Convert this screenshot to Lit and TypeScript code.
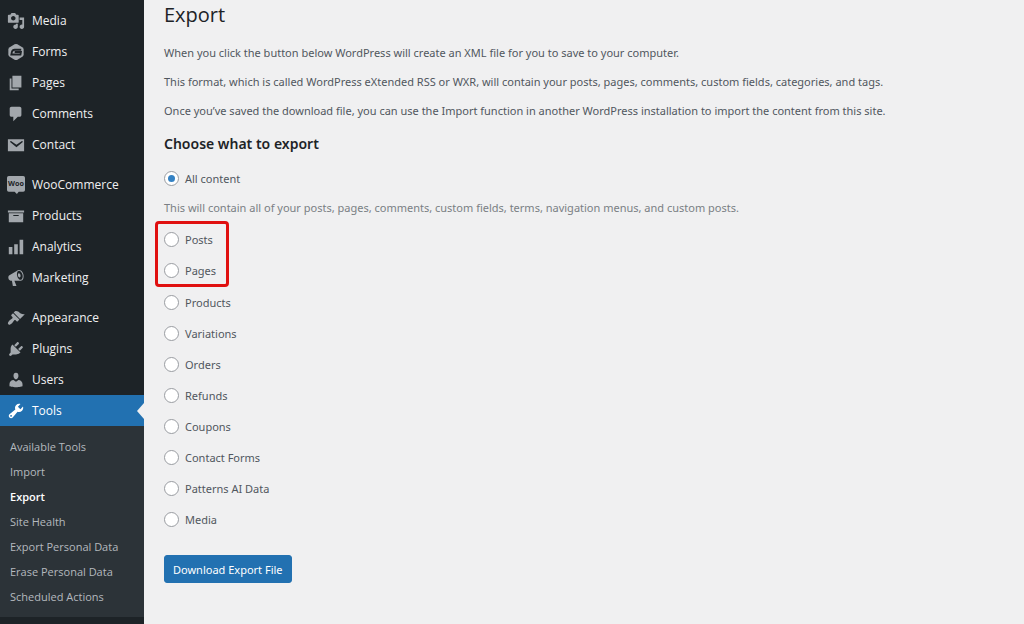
import { LitElement, html, css, svg } from "lit";
import { customElement, property, state } from "lit/decorators.js";

const icons: Record<string, unknown> = {
  media: svg`<path d="M13 11V4c0-.55-.45-1-1-1h-1.67L9 1H5L3.67 3H2c-.55 0-1 .45-1 1v7c0 .55.45 1 1 1h10c.55 0 1-.45 1-1zM7 4.5c1.38 0 2.5 1.12 2.5 2.5S8.38 9.5 7 9.5 4.5 8.38 4.5 7 5.62 4.5 7 4.5zM14 6h5v10.5c0 1.38-1.12 2.5-2.5 2.5S14 17.88 14 16.5s1.12-2.5 2.5-2.5c.17 0 .34.02.5.05V9h-3V6zm-4 8.05V13h2v3.5c0 1.38-1.12 2.5-2.5 2.5S7 17.88 7 16.5 8.12 14 9.5 14c.17 0 .34.02.5.05z"/>`,
  forms: svg`<path d="M8.400 1.500q1.600-.9 3.200 0l5.400 3.100q1.500.9 1.500 2.600v5.600q0 1.700-1.500 2.600l-5.400 3.100q-1.600.9-3.200 0L3 15.400q-1.500-.9-1.500-2.600V7.200Q1.500 5.500 3 4.600z"/><path class="cut" d="M15.800 7.500H8.500Q6 7.500 5.400 10l-.6 2.800h10.200l.5-2.800H8.500"/>`,
  pages: svg`<path d="M6 15V2h10v13H6zm-1 1h8v2H3V5h2v11z"/>`,
  comments: svg`<path d="M5 2h9c1.100 0 2 .9 2 2v7c0 1.100-.9 2-2 2h-2l-5 5v-5H5c-1.100 0-2-.9-2-2V4c0-1.100.9-2 2-2z"/>`,
  contact: svg`<path fill-rule="evenodd" d="M1 3.500h18v13.500H1zM10.500 12.600l6.740-5.530c.24-.2.430-.660.130-1.070-.290-.410-.820-.420-1.170-.170l-5.700 3.860L4.800 5.830c-.350-.250-.880-.240-1.170.170-.300.410-.110.870.130 1.070z"/>`,
  woo: svg`<path d="M2 0h16q2 0 2 2v13.500q0 2-2 2h-5L11 20 8.500 17.500H2q-2 0-2-2V2Q0 0 2 0z"/><text class="woo" x="10" y="11" text-anchor="middle">Woo</text>`,
  products: svg`<path d="M19 4v2H1V4h18zM2 7h16v10H2V7zm11 3V9H7v1h6z"/>`,
  analytics: svg`<path d="M18 18V2h-4v16h4zm-6 0V7H8v11h4zm-6 0v-8H2v8h4z"/>`,
  marketing: svg`<path d="M18.15 5.94c.46 1.62.38 3.22-.02 4.48-.42 1.28-1.26 2.18-2.3 2.48-.16.06-.26.06-.4.06-.06.02-.12.02-.18.02-.06.02-.14.02-.22.02h-6.8l2.22 5.5c.02.14-.06.26-.14.34-.08.1-.24.16-.34.16H6.95c-.1 0-.26-.06-.34-.16-.08-.08-.16-.2-.14-.34l-1-5.5H4.25l-.02-.02c-.5.06-1.08-.18-1.54-.62s-.88-1.08-1.06-1.88c-.24-.8-.2-1.56-.02-2.2.18-.62.58-1.08 1.06-1.3l.02-.02 9-5.4c.1-.06.18-.1.24-.16.06-.04.14-.08.24-.12.16-.08.28-.12.5-.18 1.04-.3 2.24.1 3.22.98s1.84 2.24 2.26 3.86zm-2.58 5.98h-.02c.4-.1.74-.34 1.04-.7.58-.7.86-1.76.86-3.04 0-.64-.1-1.3-.28-1.98-.34-1.36-1.02-2.5-1.78-3.24s-1.68-1.1-2.46-.88c-.82.22-1.4.96-1.7 2-.32 1.04-.28 2.36.06 3.72.38 1.36 1 2.5 1.8 3.24.78.74 1.62 1.1 2.48.88zm-2.54-7.08c.22-.04.42-.02.62.04.38.16.76.48 1.02 1s.42 1.2.42 1.78c0 .3-.04.56-.12.8-.18.48-.44.84-.86.94-.34.1-.8-.06-1.14-.4s-.64-.86-.78-1.5c-.18-.62-.12-1.24.02-1.72s.48-.84.82-.94z"/>`,
  appearance: svg`<path d="M14.48 11.06L7.41 3.99l1.5-1.5c.5-.56 2.3-.47 3.51.32 1.21.8 1.43 1.28 2.91 2.1 1.18.64 2.45 1.26 4.45.85zm-.71.71L6.7 4.7 4.93 6.47c-.39.39-.39 1.02 0 1.41l1.06 1.06c.39.39.39 1.03 0 1.42-.6.6-1.43 1.11-2.21 1.69-.35.26-.7.53-1.01.84C1.43 14.23.4 16.08 1.4 17.07c.99 1 2.84-.03 4.18-1.36.31-.31.58-.66.85-1.02.57-.78 1.08-1.61 1.69-2.21.39-.39 1.02-.39 1.41 0l1.06 1.06c.39.39 1.02.39 1.41 0z"/>`,
  plugins: svg`<path d="M13.11 4.36L9.87 7.6 8 5.73l3.24-3.24c.35-.34 1.05-.2 1.56.32.52.51.66 1.21.31 1.55zm-8 1.77l.91-1.12 9.01 9.01-1.19.84c-.71.71-2.63 1.16-3.82 1.16H6.14L4.9 17.26c-.59.59-1.54.59-2.12 0-.59-.58-.59-1.53 0-2.12l1.24-1.24v-3.88c0-1.13.4-3.19 1.09-3.89zm7.26 3.97l3.24-3.24c.34-.35 1.04-.21 1.55.31.52.51.66 1.21.31 1.55l-3.24 3.25z"/>`,
  users: svg`<path d="M10 9.25c-2.27 0-2.73-3.44-2.73-3.44C7 4.02 7.82 2 9.97 2c2.16 0 2.98 2.02 2.71 3.81 0 0-.41 3.44-2.68 3.44zm0 2.57L12.72 10c2.39 0 4.52 2.33 4.52 4.53v2.49s-3.65 1.13-7.24 1.13c-3.65 0-7.24-1.13-7.24-1.13v-2.49c0-2.25 1.94-4.48 4.47-4.48z"/>`,
  tools: svg`<path d="M16.68 9.77c-1.34 1.34-3.3 1.67-4.95.99l-5.41 6.52c-.99.99-2.59.99-3.58 0s-.99-2.59 0-3.57l6.52-5.42c-.68-1.65-.35-3.61.99-4.95 1.28-1.28 3.12-1.62 4.72-1.06l-2.89 2.89 2.82 2.82 2.86-2.87c.53 1.58.18 3.39-1.08 4.65zM3.81 16.21c.4.39 1.04.39 1.43 0 .4-.4.4-1.04 0-1.43-.39-.4-1.03-.4-1.43 0-.39.39-.39 1.03 0 1.43z"/>`,
};

const menuGroups = [
  [["media", "Media"], ["forms", "Forms"], ["pages", "Pages"], ["comments", "Comments"], ["contact", "Contact"]],
  [["woo", "WooCommerce"], ["products", "Products"], ["analytics", "Analytics"], ["marketing", "Marketing"]],
  [["appearance", "Appearance"], ["plugins", "Plugins"], ["users", "Users"], ["tools", "Tools"]],
];

const toolsPages = [
  "Available Tools",
  "Import",
  "Export",
  "Site Health",
  "Export Personal Data",
  "Erase Personal Data",
  "Scheduled Actions",
];

@customElement("admin-menu")
export class AdminMenu extends LitElement {
  @property() current = "Tools";
  @property() page = "Export";

  static styles = css`
    :host {
      display: block;
      background: #1d2327;
    }
    ul {
      list-style: none;
      margin: 0;
      padding: 0;
    }
    a {
      text-decoration: none;
    }
    .menu {
      display: flex;
      flex-direction: column;
      gap: 9px;
      padding-top: 5px;
    }
    .item {
      display: flex;
      align-items: center;
      gap: 7px;
      height: 31px;
      padding-left: 7px;
      color: #f0f0f1;
      font-size: 12px;
    }
    .icon {
      width: 18px;
      height: 18px;
      flex: none;
      fill: #a2a7ac;
    }
    .cut {
      fill: none;
      stroke: #1d2327;
      stroke-width: 2;
    }
    .woo {
      font: bold 8px "Open Sans", sans-serif;
      fill: #1d2327;
    }
    .active {
      position: relative;
      background: #2271b1;
      color: #fff;
    }
    .active .icon {
      fill: #fff;
    }
    .active::after {
      content: "";
      position: absolute;
      right: 0;
      top: 8px;
      border: solid transparent;
      border-width: 8px 7px 8px 0;
      border-right-color: #f0f0f1;
    }
    .submenu {
      background: #2c3338;
      padding: 8px 0;
    }
    .sub {
      display: block;
      padding-left: 10px;
      line-height: 25px;
      font-size: 11px;
      color: #b4b9be;
    }
    .here {
      color: #fff;
      font-weight: 600;
    }
  `;

  render() {
    return html`
      <nav class="menu" aria-label="Main menu">
        ${menuGroups.map(
          (group) => html`<ul>
            ${group.map(([icon, label]) => {
              const active = label === this.current;
              return html`<li>
                <a class="item ${active ? "active" : ""}" href="#${icon}">
                  <svg class="icon" viewBox="0 0 20 20" aria-hidden="true">${icons[icon]}</svg>
                  <span>${label}</span>
                </a>
                ${active
                  ? html`<ul class="submenu">
                      ${toolsPages.map(
                        (name) => html`<li>
                          <a class="sub ${name === this.page ? "here" : ""}" href="#tools">${name}</a>
                        </li>`
                      )}
                    </ul>`
                  : ""}
              </li>`;
            })}
          </ul>`
        )}
      </nav>
    `;
  }
}

@customElement("export-form")
export class ExportForm extends LitElement {
  @state() private selected = "All content";

  static styles = css`
    :host {
      display: block;
      padding: 0 20px;
      color: #50575e;
      font-family: "Noto Sans", "Open Sans", sans-serif;
      font-size: 11px;
    }
    h1 {
      margin: 0 0 15px;
      padding-top: 1px;
      font-family: "Open Sans", "Noto Sans", sans-serif;
      font-size: 20px;
      line-height: 28px;
      font-weight: 400;
      color: #1d2327;
    }
    p {
      margin: 0 0 11px;
      line-height: 18px;
    }
    h2 {
      margin: 0 0 8px;
      padding-top: 2px;
      font-size: 14px;
      line-height: 22px;
      font-weight: 600;
      color: #1d2327;
    }
    fieldset {
      margin: 0;
      padding: 0;
      border: 0;
      min-width: 0;
    }
    .option {
      display: flex;
      align-items: center;
      gap: 6px;
      height: 31px;
      width: max-content;
    }
    .radio {
      appearance: none;
      box-sizing: border-box;
      width: 15px;
      height: 15px;
      margin: 0;
      border: 1px solid #999ca1;
      border-radius: 50%;
      background: #fff;
      display: grid;
      place-content: center;
    }
    .radio:checked::before {
      content: "";
      width: 7px;
      height: 7px;
      border-radius: 50%;
      background: #3582c4;
    }
    .description {
      margin: 5px 0 7px;
      color: #7a7f84;
    }
    .marked {
      position: relative;
      margin-bottom: 1px;
      width: max-content;
    }
    .marked::after {
      content: "";
      position: absolute;
      inset: -3px -13px -1px -9px;
      border: 3px solid #e01010;
      border-radius: 4px;
      pointer-events: none;
    }
    .submit {
      margin-top: 20px;
      height: 28px;
      padding: 0 8px;
      border: 1px solid #2271b1;
      border-radius: 3px;
      background: #2271b1;
      color: #fff;
      font: inherit;
    }
  `;

  private option(label: string) {
    const id = label.toLowerCase().replace(/ /g, "-");
    return html`<label class="option" for=${id}>
      <input
        class="radio"
        type="radio"
        name="content"
        id=${id}
        .checked=${this.selected === label}
        @change=${() => (this.selected = label)}
      />
      <span>${label}</span>
    </label>`;
  }

  render() {
    return html`
      <h1>Export</h1>
      <p>When you click the button below WordPress will create an XML file for you to save to your computer.</p>
      <p>This format, which is called WordPress eXtended RSS or WXR, will contain your posts, pages, comments, custom fields, categories, and tags.</p>
      <p>Once you’ve saved the download file, you can use the Import function in another WordPress installation to import the content from this site.</p>
      <h2 id="choose">Choose what to export</h2>
      <form @submit=${(e: Event) => e.preventDefault()}>
        <fieldset aria-labelledby="choose">
          ${this.option("All content")}
          <p class="description">This will contain all of your posts, pages, comments, custom fields, terms, navigation menus, and custom posts.</p>
          <div class="marked">${["Posts", "Pages"].map((o) => this.option(o))}</div>
          ${["Products", "Variations", "Orders", "Refunds", "Coupons", "Contact Forms", "Patterns AI Data", "Media"].map((o) => this.option(o))}
        </fieldset>
        <button class="submit" type="submit">Download Export File</button>
      </form>
    `;
  }
}

@customElement("app-root")
export class AppRoot extends LitElement {
  static styles = css`
    :host {
      display: grid;
      grid-template-columns: 144px 1fr;
      min-height: 100vh;
      background: #f0f0f1;
      font-family: "Open Sans", "Noto Sans", sans-serif;
    }
  `;

  render() {
    return html`
      <admin-menu></admin-menu>
      <main><export-form></export-form></main>
    `;
  }
}
